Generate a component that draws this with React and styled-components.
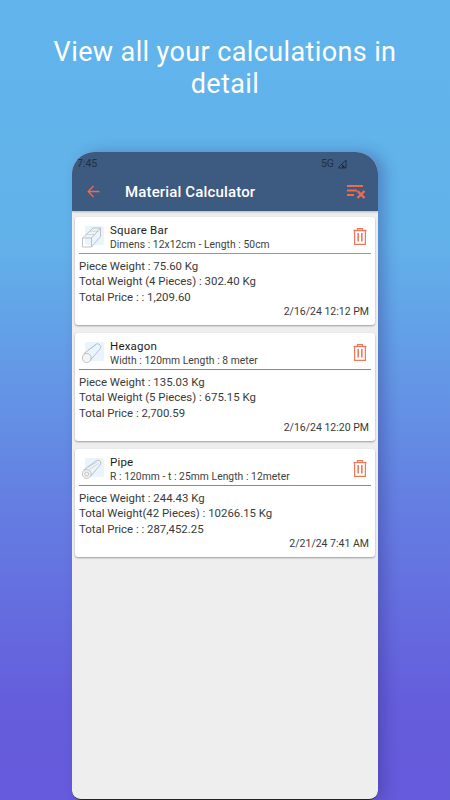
import React from "react";
import styled, { createGlobalStyle } from "styled-components";

const Global = createGlobalStyle`
  html, body { margin: 0; padding: 0; width: 450px; height: 800px; overflow: hidden; }
  * { box-sizing: border-box; }
  body { font-family: Roboto, "Liberation Sans", sans-serif; }
`;

const Page = styled.div`
  width: 450px;
  height: 800px;
  display: flex;
  flex-direction: column;
  align-items: center;
  background: linear-gradient(180deg, #60b5ec 0%, #62b2ea 30%, #6480e2 62%, #655ddc 88%, #655bdc 100%);
  overflow: hidden;
`;

const Headline = styled.h1`
  margin: 0;
  padding: 36px 40px 0;
  height: 152px;
  width: 100%;
  text-align: center;
  font-size: 27px;
  line-height: 32px;
  font-weight: 400;
  letter-spacing: 0.38px;
  color: #fff;
`;

const Phone = styled.div`
  width: 306px;
  flex: 1;
  display: flex;
  flex-direction: column;
  border-radius: 22px 22px 9px 9px;
  overflow: hidden;
  background: #eeeeee;
  box-shadow: 7px 0 14px rgba(45, 35, 120, 0.3);
  border-bottom: 1px solid #222;
`;

const AppBar = styled.header`
  height: 59px;
  flex: none;
  background: #3d5a80;
  display: flex;
  flex-direction: column;
  box-shadow: 0 1px 2px rgba(0, 0, 0, 0.25);
`;

const StatusBar = styled.div`
  height: 20px;
  padding: 3px 31px 0 5px;
  display: flex;
  justify-content: space-between;
  align-items: center;
  font-size: 10.5px;
  color: #1f3045;
`;

const Signal = styled.span`
  display: flex;
  align-items: center;
  gap: 3px;
`;

const ToolBar = styled.div`
  flex: 1;
  display: flex;
  align-items: center;
  padding: 0 11px 0 15px;
`;

const BarTitle = styled.div`
  flex: 1;
  margin-left: 25px;
  font-size: 15px;
  font-weight: 500;
  letter-spacing: 0.15px;
  color: #fff;
`;

const List = styled.main`
  display: flex;
  flex-direction: column;
  gap: 8px;
  padding: 6px 3px 0;
`;

const Card = styled.section`
  height: 108px;
  background: #fff;
  border-radius: 3px;
  box-shadow: 0 1px 2px rgba(0, 0, 0, 0.35);
  padding: 5px 4px 0 4px;
  display: flex;
  flex-direction: column;
`;

const CardHead = styled.div`
  display: flex;
  align-items: flex-start;
  padding: 0 0 0 1px;
  height: 32px;
  border-bottom: 1px solid ${(p) => p.$line};
`;

const Thumb = styled.div`
  width: 24px;
  height: 22px;
  margin: 4px 5px 0 1px;
  flex: none;
`;

const Names = styled.div`
  flex: 1;
  min-width: 0;
  margin-top: 1px;
`;

const Name = styled.div`
  font-size: 11.5px;
  line-height: 14px;
  font-weight: 400;
  letter-spacing: 0.2px;
  color: #1d1d1d;
`;

const Dims = styled.div`
  font-size: 10.3px;
  line-height: 14px;
  margin-top: 1px;
  color: #3e3e3e;
  letter-spacing: 0.05px;
  white-space: nowrap;
`;

const Trash = styled.div`
  width: 14px;
  height: 17px;
  margin: 6px 4px 0 0;
`;

const Rows = styled.div`
  padding-top: 4.5px;
`;

const Row = styled.div`
  font-size: 11.4px;
  line-height: 15.5px;
  color: #3a3a3a;
`;

const Stamp = styled.div`
  padding-right: 2px;
  text-align: right;
  font-size: 10.5px;
  line-height: 14px;
  color: #3a3a3a;
`;

const Back = () => (
  <svg width="13" height="13" viewBox="0 0 13 13" fill="none" stroke="#ee6c4d" strokeWidth="1.3">
    <path d="M12.5 6.5H1.2M6.5 1 1.2 6.5 6.5 12" />
  </svg>
);

const ClearAll = () => (
  <svg width="20" height="16" viewBox="0 0 20 16" fill="none" stroke="#ee6c4d" strokeWidth="2">
    <path d="M0 2h16M0 6.5h10M0 11h7" />
    <path d="M10.5 7l7 7M17.5 7l-7 7" strokeWidth="2.4" />
  </svg>
);

const Tri = () => (
  <svg width="10" height="10" viewBox="0 0 10 10" fill="none" stroke="#1f3045" strokeWidth="1">
    <path d="M9 1v8H1z" />
    <path d="M9 9H5V5z" fill="#1f3045" stroke="none" />
  </svg>
);

const Bin = () => (
  <svg width="14" height="17" viewBox="0 0 14 17" fill="none" stroke="#f0795a" strokeWidth="1.2">
    <path d="M0.5 2.5h13" strokeWidth="1.3" />
    <path d="M4.5 2V0.6h5V2" />
    <path d="M1.6 2.5v13.9h10.8V2.5" />
    <path d="M5.2 5v8.5M8.8 5v8.5" strokeWidth="1.6" />
  </svg>
);

const Frame = ({ children }) => (
  <svg width="24" height="22" viewBox="0 0 24 22" fill="none" stroke="#ababab" strokeWidth="0.7">
    <rect x="4" width="19" height="19" rx="2" fill="#e9f4fd" stroke="none" />
    {children}
  </svg>
);

const BarShape = () => (
  <Frame>
    <path d="M1.5 12h9v9h-9zM1.5 12 12 2h7.5L10.5 12M19.5 2v8.5L10.5 21" />
    <path d="M5.5 8.5h8.5M9 5.2h8.5" strokeWidth="0.4" />
  </Frame>
);

const HexShape = () => (
  <Frame>
    <path d="M2.5 12 14 3a3 3 0 0 1 5 4L9 18.5" />
    <ellipse cx="5.7" cy="16" rx="4.4" ry="4.6" fill="#f4f4f4" />
    <path d="M7 8 15 3" strokeWidth="0.4" />
  </Frame>
);

const PipeShape = () => (
  <Frame>
    <path d="M2.5 12 15 3a2.8 2.8 0 0 1 4 4L9.5 18.5" />
    <circle cx="5.7" cy="16" r="4.4" fill="#f4f4f4" />
    <circle cx="5.7" cy="16" r="2" />
    <path d="M6.5 9.5 16 4M8.5 11.5l9-6" strokeWidth="0.4" />
  </Frame>
);

const items = [
  {
    icon: <BarShape />,
    name: "Square Bar",
    dims: "Dimens : 12x12cm - Length : 50cm",
    line: "#f2764f",
    rows: ["Piece Weight : 75.60 Kg", "Total Weight (4 Pieces) : 302.40 Kg", "Total Price : : 1,209.60"],
    when: "2/16/24 12:12 PM",
  },
  {
    icon: <HexShape />,
    name: "Hexagon",
    dims: "Width : 120mm Length : 8 meter",
    line: "#dc6a48",
    rows: ["Piece Weight : 135.03 Kg", "Total Weight (5 Pieces) : 675.15 Kg", "Total Price : 2,700.59"],
    when: "2/16/24 12:20 PM",
  },
  {
    icon: <PipeShape />,
    name: "Pipe",
    dims: "R : 120mm - t : 25mm Length : 12meter",
    line: "#ea6a35",
    rows: ["Piece Weight : 244.43 Kg", "Total Weight(42 Pieces) : 10266.15 Kg", "Total Price : : 287,452.25"],
    when: "2/21/24 7:41 AM",
  },
];

export default function App() {
  return (
    <Page>
      <Global />
      <Headline>View all your calculations in detail</Headline>
      <Phone>
        <AppBar>
          <StatusBar>
            <span>7:45</span>
            <Signal>
              5G <Tri />
            </Signal>
          </StatusBar>
          <ToolBar>
            <Back />
            <BarTitle>Material Calculator</BarTitle>
            <ClearAll />
          </ToolBar>
        </AppBar>
        <List>
          {items.map((it) => (
            <Card key={it.name}>
              <CardHead $line={it.line}>
                <Thumb>{it.icon}</Thumb>
                <Names>
                  <Name>{it.name}</Name>
                  <Dims>{it.dims}</Dims>
                </Names>
                <Trash>
                  <Bin />
                </Trash>
              </CardHead>
              <Rows>
                {it.rows.map((r) => (
                  <Row key={r}>{r}</Row>
                ))}
              </Rows>
              <Stamp>{it.when}</Stamp>
            </Card>
          ))}
        </List>
      </Phone>
    </Page>
  );
}
